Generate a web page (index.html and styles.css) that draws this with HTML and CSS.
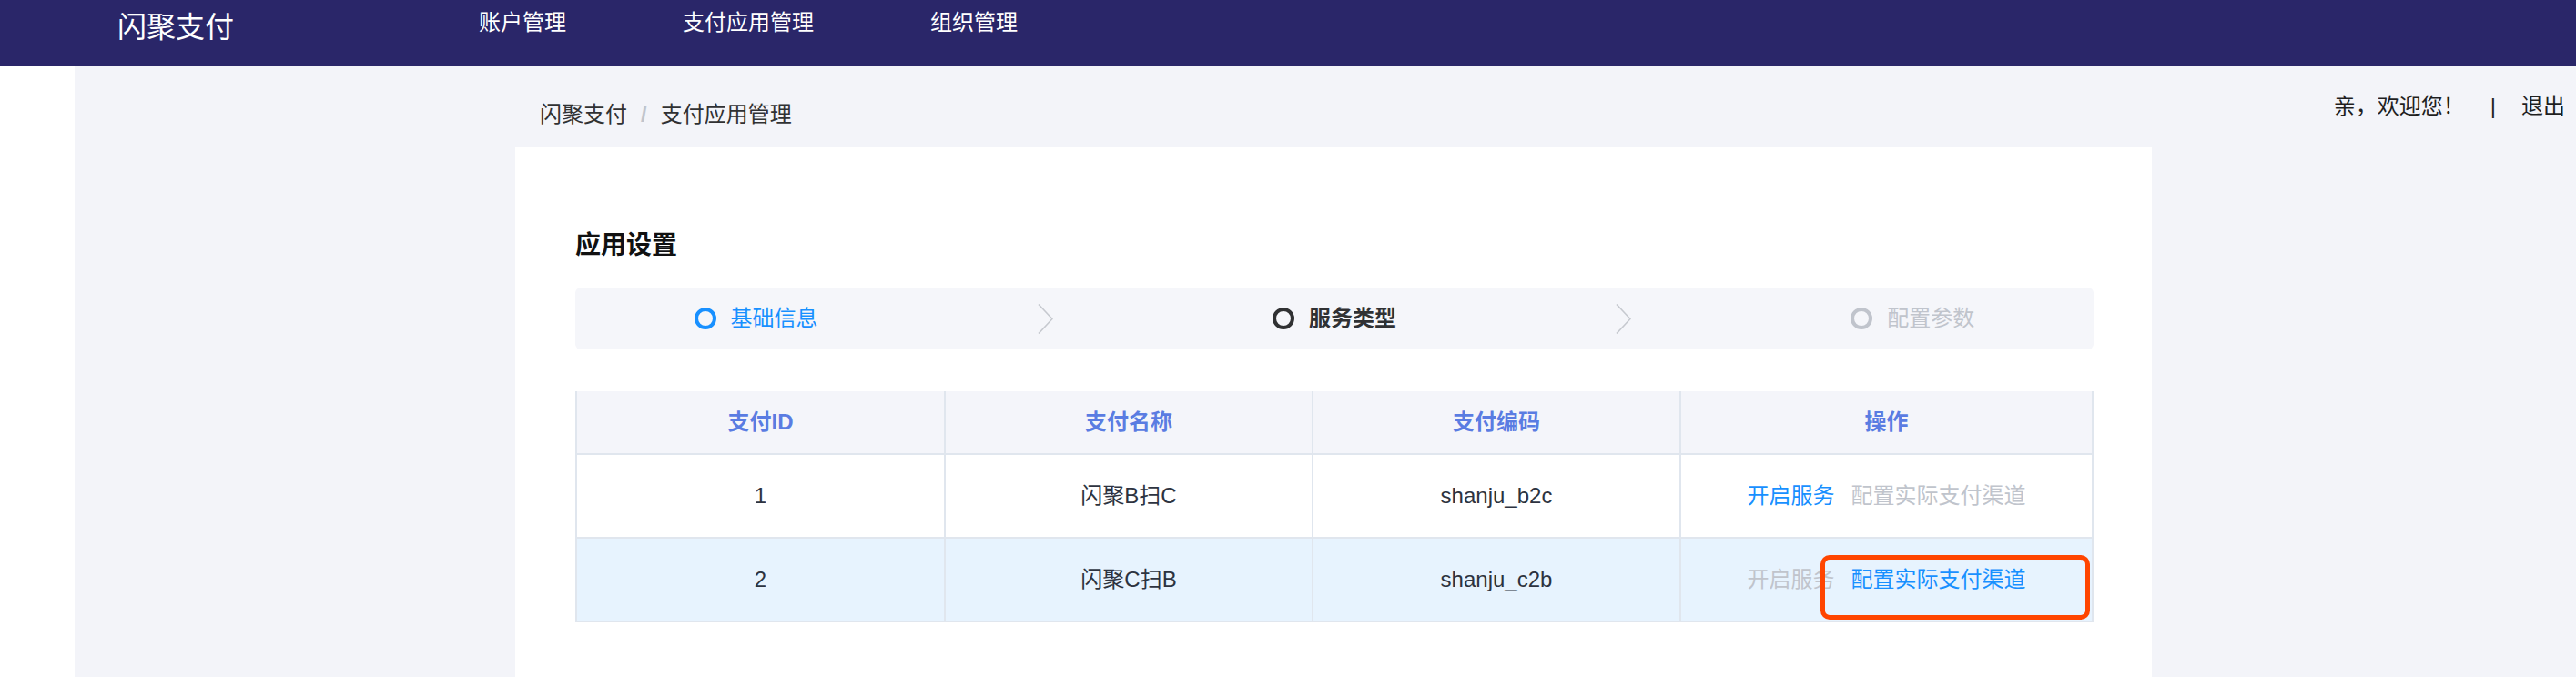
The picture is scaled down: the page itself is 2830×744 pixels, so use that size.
FILE: index.html
```html
<!DOCTYPE html>
<html lang="zh-CN">
<head>
<meta charset="utf-8">
<title>闪聚支付 - 支付应用管理</title>
<link rel="stylesheet" href="styles.css">
</head>
<body>
<header class="topbar">
  <div class="logo">闪聚支付</div>
  <nav class="nav">
    <a class="nav-item">账户管理</a>
    <a class="nav-item">支付应用管理</a>
    <a class="nav-item">组织管理</a>
  </nav>
</header>
<div class="layout">
  <aside class="side"></aside>
  <main class="content">
    <div class="breadcrumb">
      <span class="crumb">闪聚支付</span><span class="crumb-sep">/</span><span class="crumb">支付应用管理</span>
    </div>
    <div class="user">
      <span>亲，欢迎您！</span><span class="user-sep">|</span><a class="logout">退出</a>
    </div>
    <section class="card">
      <h2 class="card-title">应用设置</h2>
      <div class="steps">
        <div class="step step-done"><span class="step-dot"></span><span>基础信息</span></div>
        <svg class="step-arrow" width="17" height="33" viewBox="0 0 17 33"><polyline points="1,0.5 16,16.5 1,32.5" fill="none" stroke="#c6c9cf" stroke-width="1.6"/></svg>
        <div class="step step-active"><span class="step-dot"></span><span>服务类型</span></div>
        <svg class="step-arrow" width="17" height="33" viewBox="0 0 17 33"><polyline points="1,0.5 16,16.5 1,32.5" fill="none" stroke="#c6c9cf" stroke-width="1.6"/></svg>
        <div class="step step-wait"><span class="step-dot"></span><span>配置参数</span></div>
      </div>
      <div class="table-wrap">
        <table class="grid">
          <colgroup>
            <col class="col-a"><col class="col-b"><col class="col-c"><col>
          </colgroup>
          <thead>
            <tr><th>支付ID</th><th>支付名称</th><th>支付编码</th><th>操作</th></tr>
          </thead>
          <tbody>
            <tr>
              <td>1</td><td>闪聚B扫C</td><td>shanju_b2c</td>
              <td><a class="op op-on">开启服务</a><a class="op op-off">配置实际支付渠道</a></td>
            </tr>
            <tr class="row-current">
              <td>2</td><td>闪聚C扫B</td><td>shanju_c2b</td>
              <td><a class="op op-off">开启服务</a><a class="op op-on">配置实际支付渠道</a></td>
            </tr>
          </tbody>
        </table>
        <div class="highlight"></div>
      </div>
    </section>
  </main>
</div>
</body>
</html>
```

FILE: styles.css
```css
* { box-sizing: border-box; }

html, body {
  margin: 0;
  padding: 0;
}

body {
  width: 2830px;
  height: 744px;
  overflow: hidden;
  background: #ffffff;
  font-family: "Liberation Sans", "Noto Sans CJK SC", sans-serif;
  color: #303133;
  display: flex;
  flex-direction: column;
}

a { text-decoration: none; cursor: pointer; }

/* top bar */
.topbar {
  height: 72px;
  flex: 0 0 72px;
  background: #2a2669;
  display: flex;
  align-items: flex-start;
  color: #ffffff;
}

.logo {
  width: 397px;
  margin-left: 129px;
  font-size: 32px;
  line-height: 60px;
}

.nav {
  display: flex;
  gap: 128px;
}

.nav-item {
  color: #ffffff;
  font-size: 24px;
  line-height: 50px;
}

/* body layout */
.layout {
  flex: 1;
  display: flex;
  min-height: 0;
}

.side {
  width: 82px;
  flex: 0 0 82px;
  background: #ffffff;
}

.content {
  flex: 1;
  background: #f3f4f9;
  display: grid;
  grid-template-columns: 484px 1798px 1fr;
  grid-template-rows: 90px 1fr;
}

.breadcrumb {
  grid-column: 2;
  grid-row: 1;
  padding: 37px 0 0 27px;
  font-size: 24px;
  line-height: 34px;
  color: #303133;
}

.crumb-sep {
  margin: 0 15px;
  color: #c0c4cc;
  font-weight: bold;
}

.user {
  grid-column: 3;
  grid-row: 1;
  justify-self: end;
  padding: 28px 12px 0 0;
  font-size: 24px;
  line-height: 34px;
  color: #1f1f1f;
}

.user-sep {
  margin: 0 28px;
}

.logout { color: #1f1f1f; }

/* card */
.card {
  grid-column: 2;
  grid-row: 2;
  background: #ffffff;
  padding: 88px 64px 0 66px;
}

.card-title {
  margin: 0 0 26px;
  font-size: 28px;
  line-height: 40px;
  font-weight: bold;
  color: #111111;
}

/* steps */
.steps {
  height: 68px;
  border-radius: 6px;
  background: #f5f6fa;
  display: flex;
  align-items: center;
  justify-content: space-around;
  padding: 0 10px;
}

.step {
  display: flex;
  align-items: center;
  gap: 16px;
  font-size: 24px;
  line-height: 34px;
}

.step-dot {
  width: 24px;
  height: 24px;
  border: 4px solid currentColor;
  border-radius: 50%;
}

.step-done { color: #1890ff; }
.step-active { color: #303133; font-weight: bold; }
.step-wait { color: #c0c4cc; }

.step-arrow { display: block; }

/* table */
.table-wrap {
  position: relative;
  margin-top: 46px;
}

.grid {
  width: 1668px;
  border-collapse: separate;
  border-spacing: 0;
  table-layout: fixed;
  font-size: 24px;
  line-height: 34px;
}

.col-a { width: 407px; }
.col-b { width: 404px; }
.col-c { width: 404px; }

.grid th,
.grid td {
  text-align: center;
  border-right: 2px solid #e0e6ee;
  border-bottom: 2px solid #e0e6ee;
  white-space: nowrap;
}

.grid th:first-child,
.grid td:first-child {
  border-left: 2px solid #e0e6ee;
}

.grid th {
  background: #f4f5fa;
  color: #5a7ce2;
  font-weight: bold;
  padding: 17px 0;
}

.grid td {
  color: #2d3340;
  padding: 28px 0;
  background: #ffffff;
}

.grid .row-current td {
  background: #e7f3fe;
}

.op + .op { margin-left: 18px; }
.op-on { color: #1890ff; }
.op-off { color: #c0c4cc; }

.highlight {
  position: absolute;
  left: 1368px;
  top: 180px;
  width: 296px;
  height: 71px;
  border: 5px solid #ff4500;
  border-radius: 10px;
  pointer-events: none;
}
```
